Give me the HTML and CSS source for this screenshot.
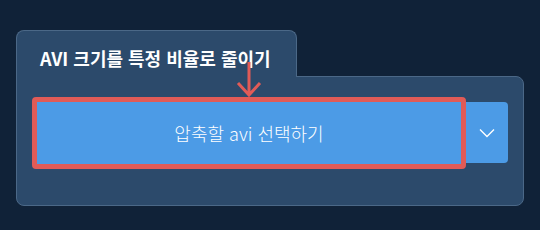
FILE: index.html
```html
<!DOCTYPE html>
<html lang="ko">
<head>
    <meta charset="UTF-8">
    <meta name="viewport" content="width=device-width, initial-scale=1.0">
    <title>AVI 크기 줄이기</title>
    <link rel="stylesheet" href="styles.css">
</head>
<body>
<div class="card">
    <div class="tab">
        <h2>AVI 크기를 특정 비율로 줄이기</h2>
    </div>
    <div class="panel">
        <div class="picker">
            <div class="main-wrap">
                <button class="main-btn">압축할 avi 선택하기</button>
            </div>
            <button class="drop-btn">
                <svg width="16" height="10" viewBox="0 0 16 10">
                    <path d="M1 1.5 L8 8.5 L15 1.5" fill="none" stroke="#fff" stroke-width="1.4"/>
                </svg>
            </button>
        </div>
        <svg class="arrow" width="30" height="36" viewBox="0 0 30 36">
            <path d="M15 0 V33 M4 21 L15 33 L26 21" fill="none" stroke="#e15b57" stroke-width="3"/>
        </svg>
    </div>
</div>
</body>
</html>
```

FILE: styles.css
```css
body {
    margin: 0;
    background-color: #102238;
    font-family: "Noto Sans CJK KR", "Noto Sans", sans-serif;
}
.card {
    padding: 30px 16px 0 16px;
    width: 508px;
}
.tab {
    display: inline-block;
    width: 281px;
    height: 47px;
    background-color: #2c4a6b;
    border: 1px solid #4b6887;
    border-bottom: none;
    border-radius: 8px 8px 0 0;
    position: relative;
    z-index: 1;
    margin-bottom: -1px;
    box-sizing: border-box;
    vertical-align: top;
}
.tab h2 {
    margin: 0;
    padding: 15px 0 0 23px;
    font-size: 18px;
    font-weight: bold;
    color: #fff;
    line-height: 24px;
}
.panel {
    position: relative;
    height: 130px;
    background-color: #2c4a6b;
    border: 1px solid #4b6887;
    border-radius: 0 8px 8px 8px;
    box-sizing: border-box;
    padding: 20px 15px 0 15px;
}
.picker {
    display: flex;
    align-items: center;
}
.main-wrap {
    border: 5px solid #e15b57;
    border-radius: 4px;
    margin-right: -5px;
    position: relative;
    z-index: 1;
}
.main-btn {
    display: block;
    width: 424px;
    height: 62px;
    background-color: #4c9be6;
    border: none;
    color: #fff;
    font-family: inherit;
    font-size: 18px;
    font-weight: 300;
    padding: 0;
    margin: 0;
}
.drop-btn {
    width: 47px;
    height: 61px;
    margin-top: -1px;
    background-color: #4c9be6;
    border: none;
    border-radius: 0 4px 4px 0;
    display: flex;
    align-items: center;
    justify-content: center;
    padding: 0 0 0 5px;
}
.arrow {
    position: absolute;
    left: 217px;
    top: -15px;
    z-index: 2;
}
```
